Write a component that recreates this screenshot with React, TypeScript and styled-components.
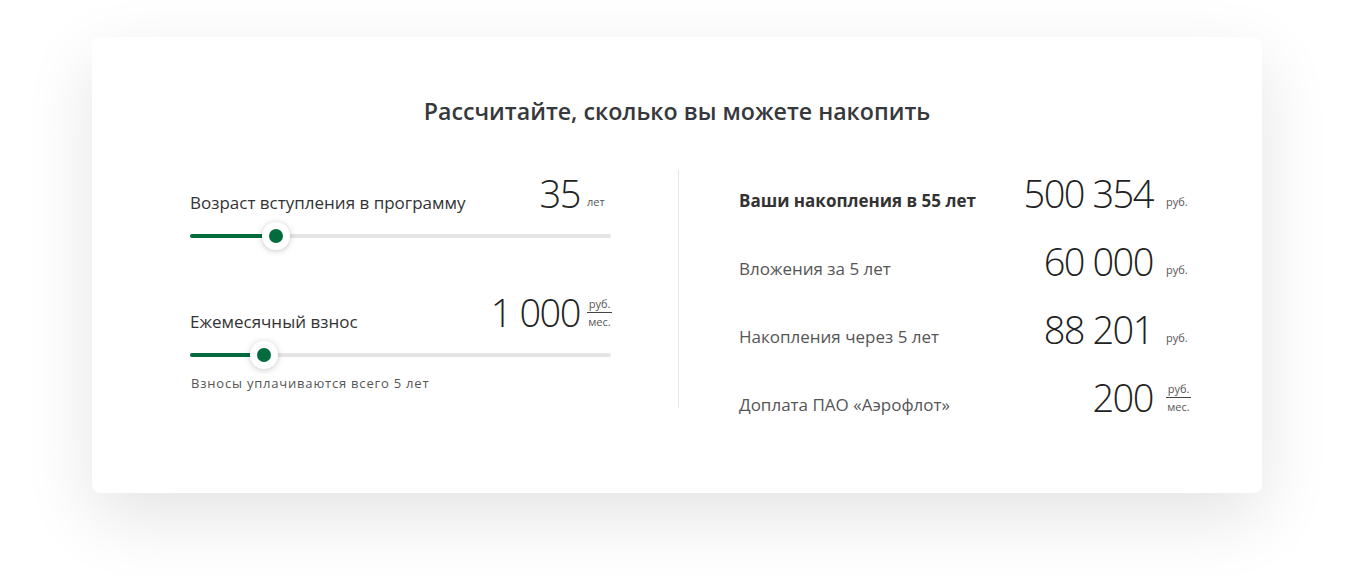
import React from "react";
import styled, { createGlobalStyle } from "styled-components";

const Global = createGlobalStyle`
  html, body { margin: 0; padding: 0; background: #fff; }
  body { font-family: "Open Sans", "Liberation Sans", sans-serif; color: #333; }
`;

const Page = styled.div`
  padding: 37px 99px 91px 92px;
`;

const Card = styled.div`
  height: 456px;
  box-sizing: border-box;
  background: #fff;
  border-radius: 8px;
  box-shadow: 0 24px 70px rgba(0, 0, 0, 0.11);
  padding-top: 59px;
`;

const Title = styled.h2`
  margin: 0;
  text-align: center;
  font-size: 23.2px;
  line-height: 30px;
  font-weight: 600;
  color: #36383c;
`;

const Columns = styled.div`
  display: flex;
  align-items: flex-start;
  margin: 44px 0 0 98px;
`;

const Left = styled.div`
  width: 421px;
  display: flex;
  flex-direction: column;
  padding-top: 3px;
`;

const Divider = styled.div`
  flex: none;
  width: 1px;
  height: 238px;
  margin: 0 60px 0 67px;
  background: #e4e4e4;
`;

const Right = styled.div`
  width: 451px;
  display: flex;
  flex-direction: column;
  gap: 28px;
  padding-top: 3px;
`;

const Field = styled.div<{ $gap: number }>`
  margin-bottom: ${(p) => p.$gap}px;
`;

const FieldHead = styled.div`
  display: flex;
  align-items: flex-end;
  justify-content: space-between;
`;

const FieldLabel = styled.span`
  font-size: 17px;
  line-height: 22px;
  color: #333;
  margin-bottom: -1px;
`;

const ValueBox = styled.div<{ $gap: number }>`
  display: flex;
  align-items: flex-end;
  gap: ${(p) => p.$gap}px;
`;

const Big = styled.span`
  font-size: 38px;
  font-weight: 300;
  line-height: 40px;
  color: #222;
  letter-spacing: -1.5px;
`;

const UnitSlot = styled.div`
  width: 24px;
  display: flex;
`;

const Unit = styled.span`
  font-size: 11px;
  line-height: 13px;
  color: #555;
  margin-bottom: 5px;
`;

const Fraction = styled.span`
  width: 25px;
  flex: none;
  display: inline-flex;
  flex-direction: column;
  align-items: stretch;
  font-size: 11px;
  line-height: 13px;
  color: #555;
  margin-bottom: 4px;
  & > span {
    text-align: center;
  }
  & > span:first-child {
    border-bottom: 1px solid #444;
    padding-bottom: 2px;
    margin-bottom: 2px;
  }
`;

const Track = styled.div`
  position: relative;
  height: 4px;
  border-radius: 2px;
  background: #e5e5e5;
  margin-top: 21px;
`;

const Fill = styled.div`
  height: 100%;
  border-radius: 2px;
  background: #046b3f;
`;

const Thumb = styled.div`
  position: absolute;
  top: 50%;
  width: 28px;
  height: 28px;
  margin: -14px 0 0 -14px;
  border-radius: 50%;
  background: #fff;
  box-shadow: 0 1px 6px rgba(0, 0, 0, 0.22);
  display: flex;
  align-items: center;
  justify-content: center;
  &::after {
    content: "";
    width: 14px;
    height: 14px;
    border-radius: 50%;
    background: #046b3f;
  }
`;

const Note = styled.div`
  font-size: 13px;
  line-height: 16px;
  color: #555;
  letter-spacing: 0.8px;
  margin-top: 18px;
  padding-left: 1px;
`;

const Row = styled.div`
  display: flex;
  align-items: flex-end;
  height: 40px;
`;

const RowLabel = styled.span<{ $bold?: boolean }>`
  flex: 1;
  font-size: 17px;
  line-height: 22px;
  font-weight: ${(p) => (p.$bold ? 700 : 400)};
  color: ${(p) => (p.$bold ? "#333" : "#555")};
  margin-bottom: 1px;
`;

type UnitKind = "rub" | "rubmes" | "years";

const UnitView = ({ kind }: { kind: UnitKind }) => (
  <UnitSlot>
    {kind === "rubmes" ? (
      <Fraction>
        <span>руб.</span>
        <span>мес.</span>
      </Fraction>
    ) : (
      <Unit>{kind === "rub" ? "руб." : "лет"}</Unit>
    )}
  </UnitSlot>
);

const Slider = ({ pos }: { pos: number }) => (
  <Track>
    <Fill style={{ width: `${pos}px` }} />
    <Thumb style={{ left: `${pos}px` }} />
  </Track>
);

const results: { label: string; value: string; unit: UnitKind; bold?: boolean }[] = [
  { label: "Ваши накопления в 55 лет", value: "500 354", unit: "rub", bold: true },
  { label: "Вложения за 5 лет", value: "60 000", unit: "rub" },
  { label: "Накопления через 5 лет", value: "88 201", unit: "rub" },
  { label: "Доплата ПАО «Аэрофлот»", value: "200", unit: "rubmes" },
];

export default function App() {
  return (
    <>
      <Global />
      <Page>
        <Card>
          <Title>Рассчитайте, сколько вы можете накопить</Title>
          <Columns>
            <Left>
              <Field $gap={54}>
                <FieldHead>
                  <FieldLabel>Возраст вступления в программу</FieldLabel>
                  <ValueBox $gap={7}>
                    <Big>35</Big>
                    <UnitView kind="years" />
                  </ValueBox>
                </FieldHead>
                <Slider pos={86} />
              </Field>
              <Field $gap={0}>
                <FieldHead>
                  <FieldLabel>Ежемесячный взнос</FieldLabel>
                  <ValueBox $gap={7}>
                    <Big>1 000</Big>
                    <UnitView kind="rubmes" />
                  </ValueBox>
                </FieldHead>
                <Slider pos={74} />
                <Note>Взносы уплачиваются всего 5 лет</Note>
              </Field>
            </Left>
            <Divider />
            <Right>
              {results.map((r) => (
                <Row key={r.label}>
                  <RowLabel $bold={r.bold}>{r.label}</RowLabel>
                  <ValueBox $gap={13}>
                    <Big>{r.value}</Big>
                    <UnitView kind={r.unit} />
                  </ValueBox>
                </Row>
              ))}
            </Right>
          </Columns>
        </Card>
      </Page>
    </>
  );
}
